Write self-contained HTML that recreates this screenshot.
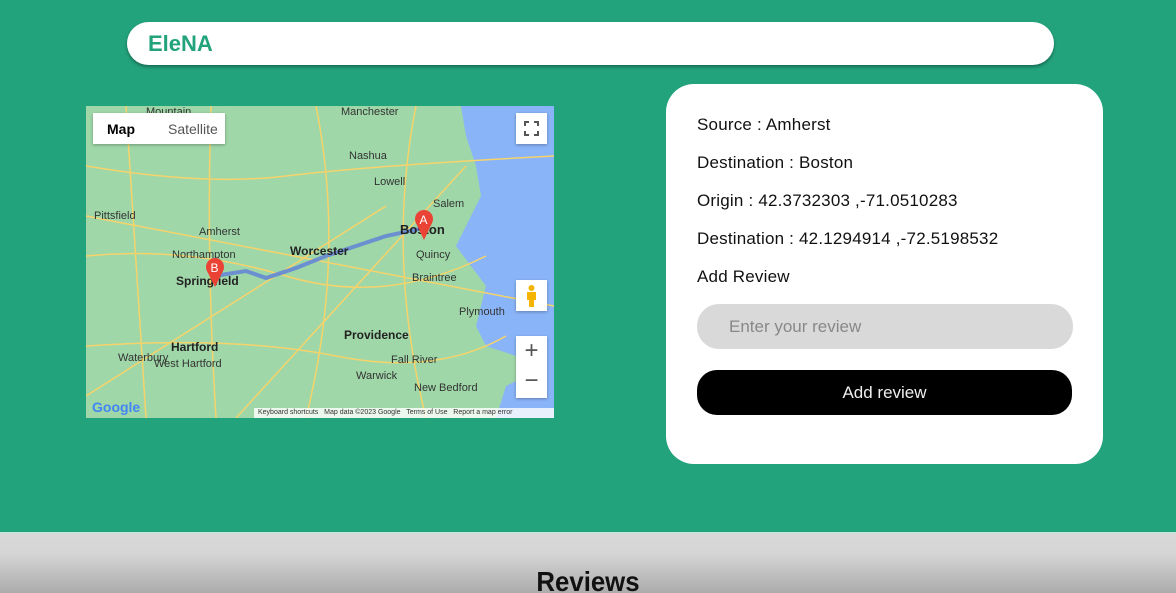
<!DOCTYPE html>
<html><head><meta charset="utf-8"><style>
*{margin:0;padding:0;box-sizing:border-box}
html,body{width:1176px;height:593px;overflow:hidden}
body{background:#22a37b;font-family:"Liberation Sans",sans-serif;position:relative}
.nav{position:absolute;left:127px;top:22px;width:927px;height:43px;background:#fff;border-radius:22px;box-shadow:0 2px 3px rgba(0,0,0,.35)}
.nav span{position:absolute;left:21px;top:9px;font-weight:bold;font-size:22px;color:#22a37b}
.map{position:absolute;left:86px;top:106px;width:468px;height:312px;background:#9fd7a8;overflow:hidden}
.card{position:absolute;left:666px;top:84px;width:437px;height:380px;background:#fff;border-radius:28px}
.card p{position:absolute;left:31px;font-size:17px;color:#111;letter-spacing:0.2px}
.inp{position:absolute;left:31px;top:220px;width:376px;height:45px;background:#d9d9d9;border-radius:22px;font-size:17px;color:#888;padding:13px 0 0 32px}
.btn{position:absolute;left:31px;top:286px;width:375px;height:45px;background:#000;border-radius:20px;color:#eee;font-size:17px;text-align:center;line-height:45px}
.bottom{position:absolute;left:0;top:532px;width:1176px;height:61px;background:linear-gradient(#d8d8d8 0,#d6d6d6 20px,#aaa 61px);border-top:1px solid #bfe9d8;overflow:hidden}
.bottom span{position:absolute;left:0;width:100%;text-align:center;top:33px;font-size:28px;font-weight:bold;color:#111;transform:scaleX(.92)}
.lbl{position:absolute;font-size:11px;color:#333}
.ctl{position:absolute;background:#fff;box-shadow:0 1px 3px rgba(0,0,0,.3)}
</style></head><body>
<div class="nav"><span>EleNA</span></div>
<div class="map">
<svg width="468" height="312" style="position:absolute;left:0;top:0">
<path d="M375 0 L468 0 L468 312 L410 312 L420 280 L440 270 L430 250 L400 240 L390 220 L400 180 L370 140 L395 90 L390 60 L380 30Z" fill="#8ab4f8"/>
<g stroke="#f6d36b" stroke-width="1.5" fill="none">
<path d="M0 60 Q120 80 200 70 T468 50"/><path d="M0 150 Q100 140 200 170 T400 150"/><path d="M0 240 Q150 230 250 250 T420 230"/>
<path d="M40 0 L60 312"/><path d="M125 0 Q120 150 130 312"/><path d="M230 0 Q260 150 220 312"/><path d="M330 0 Q300 150 340 312"/>
<path d="M0 110 L468 200"/><path d="M0 290 L300 100"/><path d="M150 312 L380 60"/>
</g>
<path d="M128 170 L160 165 L180 172 L210 162 L240 150 L270 140 L300 130 L338 122" stroke="#6c8fd0" stroke-width="4" fill="none"/>
</svg>
<div class="lbl" style="left:60px;top:0">Mountain</div>
<div class="lbl" style="left:255px;top:0">Manchester</div>
<div class="lbl" style="left:263px;top:44px">Nashua</div>
<div class="lbl" style="left:288px;top:70px">Lowell</div>
<div class="lbl" style="left:347px;top:92px">Salem</div>
<div class="lbl" style="left:8px;top:104px">Pittsfield</div>
<div class="lbl" style="left:113px;top:120px">Amherst</div>
<div class="lbl" style="left:86px;top:143px">Northampton</div>
<div class="lbl" style="left:204px;top:138px;font-weight:bold;font-size:12px;color:#222">Worcester</div>
<div class="lbl" style="left:314px;top:116px;font-weight:bold;font-size:13px;color:#222">Boston</div>
<div class="lbl" style="left:330px;top:143px">Quincy</div>
<div class="lbl" style="left:326px;top:166px">Braintree</div>
<div class="lbl" style="left:90px;top:168px;font-weight:bold;font-size:12px;color:#222">Springfield</div>
<div class="lbl" style="left:373px;top:200px">Plymouth</div>
<div class="lbl" style="left:258px;top:222px;font-weight:bold;font-size:12px;color:#222">Providence</div>
<div class="lbl" style="left:85px;top:234px;font-weight:bold;font-size:12px;color:#222">Hartford</div>
<div class="lbl" style="left:68px;top:252px">West Hartford</div>
<div class="lbl" style="left:305px;top:248px">Fall River</div>
<div class="lbl" style="left:270px;top:264px">Warwick</div>
<div class="lbl" style="left:328px;top:276px">New Bedford</div>
<div class="lbl" style="left:32px;top:246px">Waterbury</div>
<div class="lbl" style="left:6px;top:293px;font-size:14px;font-weight:bold;color:#4285f4">Google</div>
<div style="position:absolute;left:168px;top:302px;width:300px;height:10px;background:rgba(255,255,255,.8);font-size:7px;color:#333;padding-left:4px;line-height:10px">Keyboard shortcuts &nbsp; Map data ©2023 Google &nbsp; Terms of Use &nbsp; Report a map error</div>
<svg width="468" height="312" style="position:absolute;left:0;top:0">
<circle cx="338" cy="113" r="9" fill="#ea4335"/><path d="M330 117 L338 134 L346 117Z" fill="#ea4335"/><text x="333.5" y="118" font-size="12" fill="#fff" font-family="Liberation Sans">A</text>
<circle cx="129" cy="161" r="9" fill="#ea4335"/><path d="M121 165 L129 181 L137 165Z" fill="#ea4335"/><text x="124.5" y="166" font-size="12" fill="#fff" font-family="Liberation Sans">B</text>
</svg>
<div class="ctl" style="left:7px;top:7px;width:132px;height:31px;font-size:14px"><span style="position:absolute;left:14px;top:8px;font-weight:bold;color:#000">Map</span><span style="position:absolute;left:75px;top:8px;color:#555">Satellite</span></div>
<div class="ctl" style="left:430px;top:7px;width:31px;height:31px"><svg width="31" height="31"><path d="M9 13V9h4M18 9h4v4M22 18v4h-4M13 22H9v-4" stroke="#555" stroke-width="2" fill="none"/></svg></div>
<div class="ctl" style="left:430px;top:174px;width:31px;height:31px"><svg width="31" height="31"><circle cx="15.5" cy="8" r="3" fill="#f5b400"/><path d="M11 12h9v8h-2v7h-5v-7h-2z" fill="#f5b400"/></svg></div>
<div class="ctl" style="left:430px;top:230px;width:31px;height:62px;font-size:24px;text-align:center;color:#555;line-height:30px">+<br>−</div>
</div>
<div class="card">
<p style="top:31px">Source : Amherst</p>
<p style="top:69px">Destination : Boston</p>
<p style="top:107px">Origin : 42.3732303 ,-71.0510283</p>
<p style="top:145px">Destination : 42.1294914 ,-72.5198532</p>
<p style="top:183px">Add Review</p>
<div class="inp">Enter your review</div>
<div class="btn">Add review</div>
</div>
<div class="bottom"><span>Reviews</span></div>
</body></html>
